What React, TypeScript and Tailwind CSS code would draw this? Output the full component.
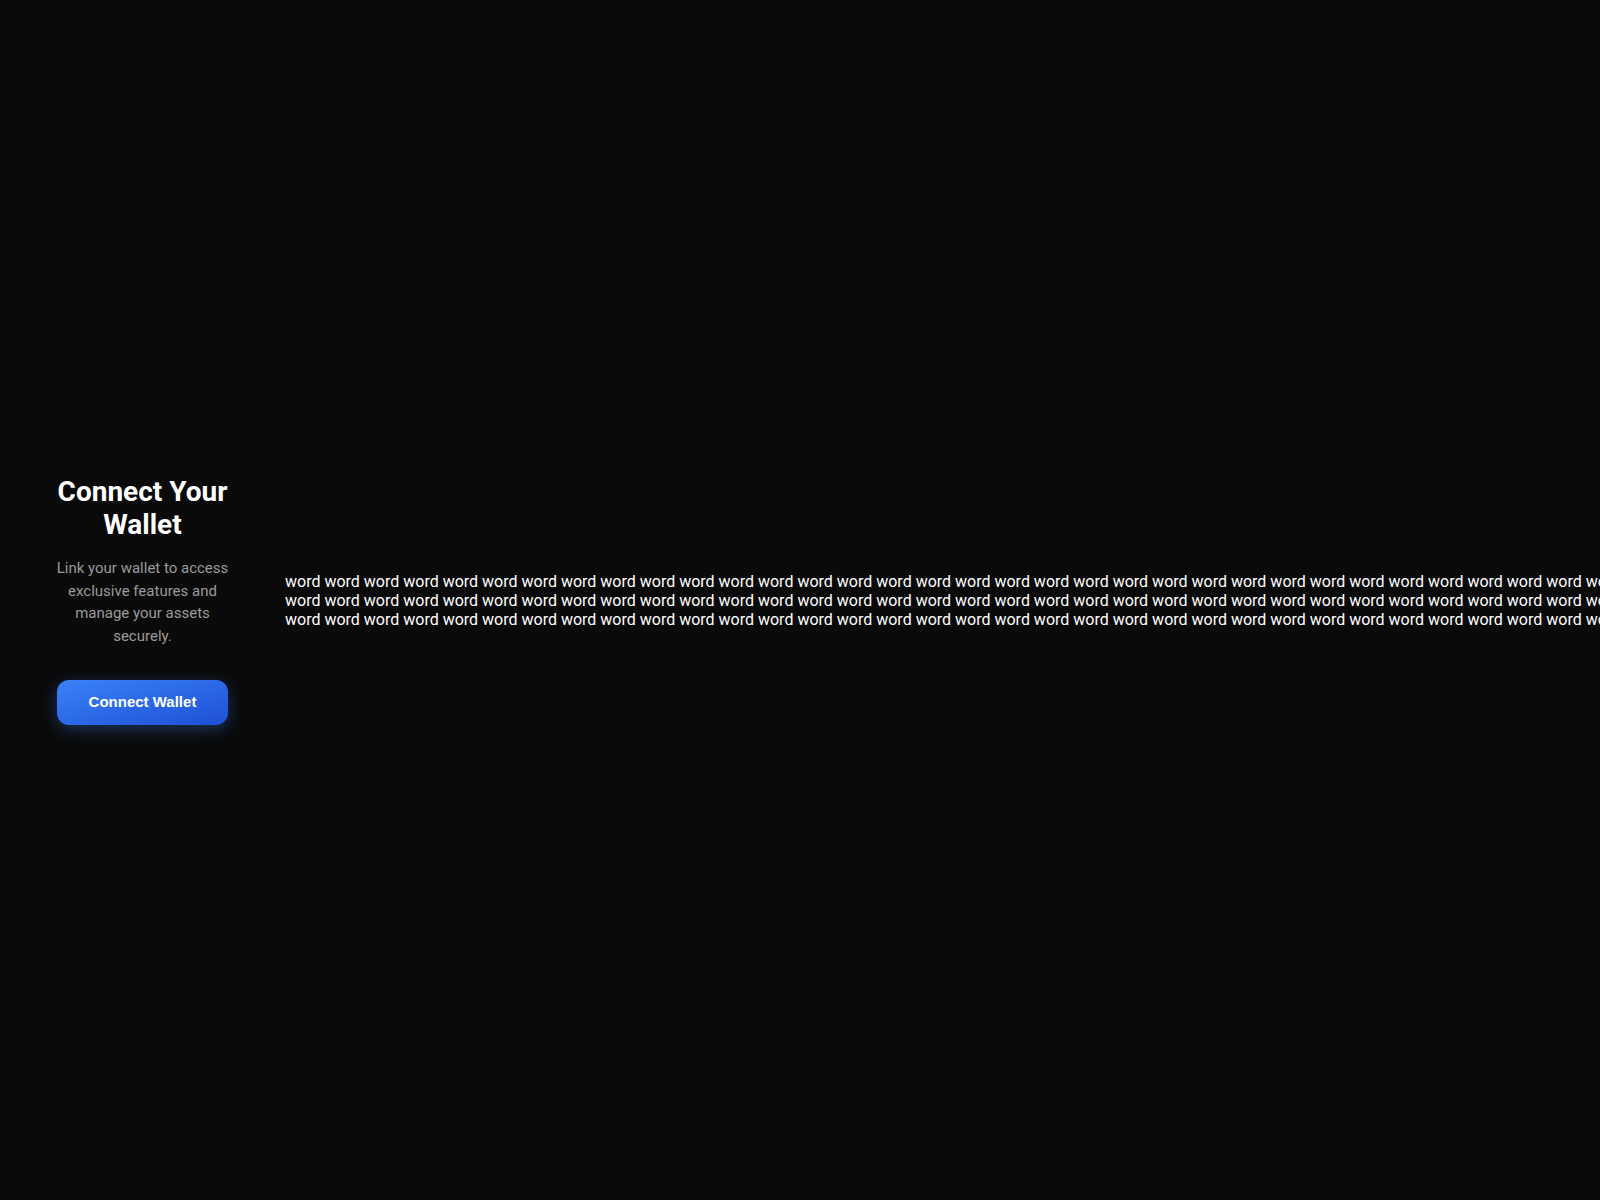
const line = Array.from({ length: 40 }, () => 'word').join(' ');

export default function App() {
  return (
    <div className="flex h-screen w-full items-center overflow-hidden bg-[#0a0a0a] font-['Roboto',sans-serif]">
      <div className="flex w-[285px] shrink-0 flex-col items-center px-[56px] text-center">
        <h1 className="text-[28px] font-bold leading-[33px] text-white">
          Connect Your Wallet
        </h1>
        <p className="mt-4 text-[15px] leading-[22.5px] text-[#9a9a9a]">
          Link your wallet to access exclusive features and manage your assets
          securely.
        </p>
        <button className="mt-[33px] h-[45px] w-[171px] rounded-xl bg-gradient-to-br from-[#3b82f6] to-[#1f4fd6] font-['Liberation_Sans',Arial,sans-serif] text-[15px] font-bold text-white shadow-[0_4px_16px_rgba(59,130,246,0.35)]">
          Connect Wallet
        </button>
      </div>
      <div className="whitespace-nowrap text-base leading-[19px] text-white">
        <div>{line}</div>
        <div>{line}</div>
        <div>{line}</div>
      </div>
    </div>
  );
}
